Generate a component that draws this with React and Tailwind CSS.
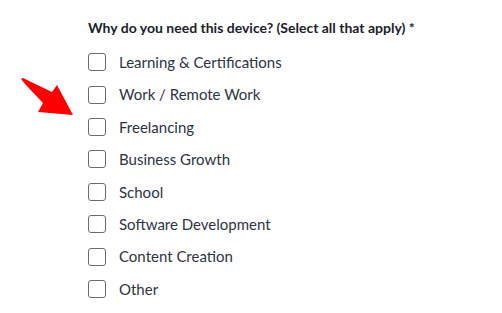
export default function App() {
  const options = [
    'Learning & Certifications',
    'Work / Remote Work',
    'Freelancing',
    'Business Growth',
    'School',
    'Software Development',
    'Content Creation',
    'Other',
  ];

  return (
    <div className="relative w-[502px] h-[313px] bg-white font-['Lato',sans-serif] overflow-hidden">
      <div className="pl-[88px] pt-[19px]">
        <div className="text-[14px] leading-[18px] font-bold text-[#1a1d2e]">
          Why do you need this device? (Select all that apply) *
        </div>
        <div className="mt-[9px] flex flex-col">
          {options.map((opt) => (
            <label key={opt} className="flex items-center h-[32.4px] gap-[13px]">
              <span className="w-[18px] h-[18px] rounded-[3px] border border-[#6b6b6b] bg-white shrink-0" />
              <span className="text-[15px] text-[#2e3445]">{opt}</span>
            </label>
          ))}
        </div>
      </div>
      {/* red pointer arrow */}
      <svg className="absolute left-0 top-0" width="90" height="130" viewBox="0 0 90 130">
        <polygon
          points="21,79 25,84 43,103 38,112 73,115 57,85 52,92 23,78"
          fill="#ff0000"
        />
      </svg>
    </div>
  );
}
